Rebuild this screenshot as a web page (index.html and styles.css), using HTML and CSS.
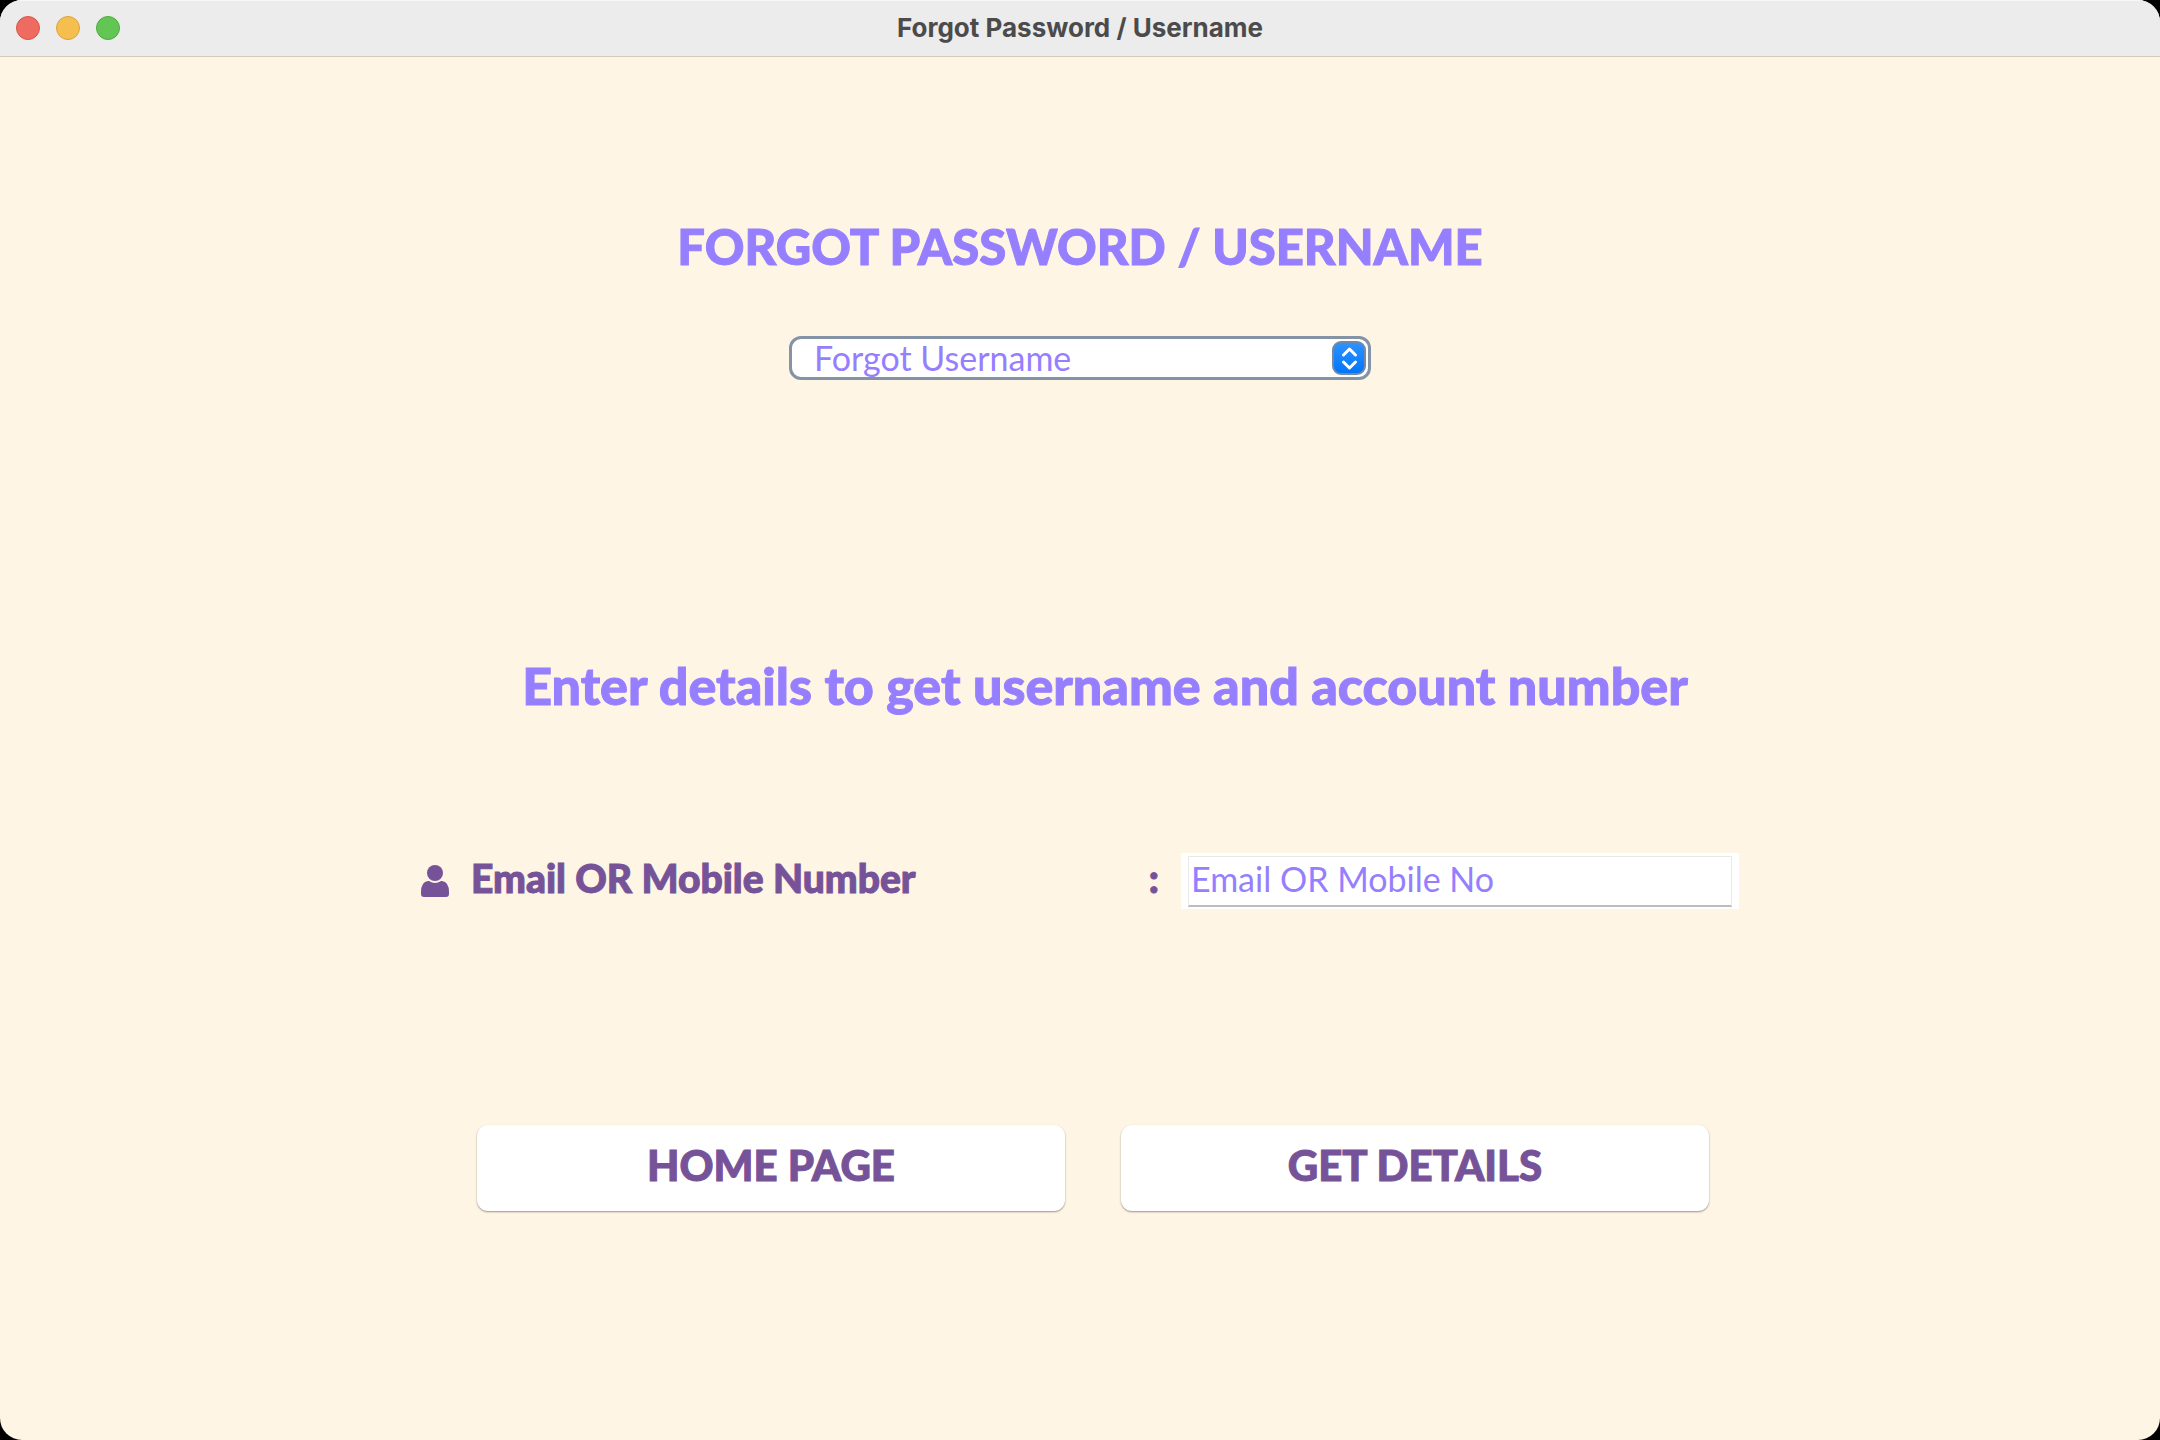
FILE: index.html
```html
<!DOCTYPE html>
<html lang="en">
<head>
<meta charset="utf-8">
<meta name="viewport" content="width=device-width, initial-scale=1">
<title>Forgot Password / Username</title>
<link rel="stylesheet" href="styles.css">
</head>
<body>
<div class="window">
  <header class="titlebar">
    <div class="lights">
      <button class="light light-close" type="button" aria-label="Close"></button>
      <button class="light light-minimise" type="button" aria-label="Minimise"></button>
      <button class="light light-zoom" type="button" aria-label="Zoom"></button>
    </div>
    <div class="window-title">Forgot Password / Username</div>
  </header>
  <main class="content">
    <h1 class="heading">FORGOT PASSWORD / USERNAME</h1>
    <div class="picker">
      <select class="picker-select" aria-label="Recovery type">
        <option>Forgot Username</option>
        <option>Forgot Password</option>
      </select>
      <svg class="picker-arrows" viewBox="0 0 34 34" aria-hidden="true">
        <defs>
          <linearGradient id="blue" x1="0" y1="0" x2="0" y2="1">
            <stop offset="0" stop-color="#3093ff"/>
            <stop offset="1" stop-color="#0074fa"/>
          </linearGradient>
        </defs>
        <rect x="1" y="1" width="32" height="32" rx="8" fill="url(#blue)" stroke="#7389a5" stroke-width="2"/>
        <path d="M11.500 14L17.500 8L23.500 14M11.500 21L17.500 27L23.500 21" fill="none" stroke="#fff" stroke-width="3" stroke-linecap="round" stroke-linejoin="round"/>
      </svg>
    </div>
    <form class="form">
      <h2 class="subheading">Enter details to get username and account number</h2>
      <div class="field">
        <svg class="user-icon" viewBox="0 0 28 32" aria-hidden="true">
          <circle cx="14" cy="8" r="8"/>
          <path d="M7 16H8Q14 20 20 16H21Q28 17 28 27V29Q28 32 25 32H3Q0 32 0 29V27Q0 17 7 16Z"/>
        </svg>
        <label class="field-label" for="contact"><span>Email OR Mobile Number</span><span>:</span></label>
        <div class="field-box">
          <input class="field-input" id="contact" type="text" placeholder="Email OR Mobile No">
        </div>
      </div>
      <div class="actions">
        <button class="action" type="button">HOME PAGE</button>
        <button class="action" type="button">GET DETAILS</button>
      </div>
    </form>
  </main>
</div>
</body>
</html>
```
FILE: styles.css
```css
* {
  box-sizing: border-box;
}

html {
  background: #000;
}

body {
  margin: 0;
  font-family: Lato, sans-serif;
}

.window {
  display: flex;
  flex-direction: column;
  min-height: 100vh;
  overflow: hidden;
  border-radius: 22px;
  background: #fff5e4;
}

.titlebar {
  display: grid;
  grid-template-columns: 1fr auto 1fr;
  align-items: center;
  height: 57px;
  padding: 0 16px 2px;
  border-top: 1px solid #f8f8f8;
  border-bottom: 1px solid #d5cbbb;
  background: #ececec;
}

.lights {
  display: flex;
  gap: 16px;
}

.light {
  width: 24px;
  height: 24px;
  padding: 0;
  border: 1px solid;
  border-radius: 50%;
}

.light-close {
  border-color: #d85549;
  background: #ed6b60;
}

.light-minimise {
  border-color: #dba13b;
  background: #f5bf4f;
}

.light-zoom {
  border-color: #52a93f;
  background: #62c655;
}

.window-title {
  color: #4b4b4b;
  font: 700 26px/32px Inter, sans-serif;
}

.content {
  display: flex;
  flex-direction: column;
  align-items: center;
  padding: 159px 24px;
}

.heading,
.subheading {
  margin: 0;
  color: #967fff;
  font-weight: 900;
  line-height: 60px;
  text-align: center;
  -webkit-text-stroke: 1px currentColor;
}

.heading {
  font-size: 49px;
}

.subheading {
  padding-left: 50px;
  font-size: 52px;
}

.picker {
  position: relative;
  width: 100%;
  max-width: 582px;
  margin-top: 60px;
}

.picker-select {
  display: block;
  width: 100%;
  height: 44px;
  padding: 0 48px 0 22px;
  border: 3px solid #8493a5;
  border-radius: 12px;
  appearance: none;
  background: #fff;
  color: #967fff;
  font: 400 34px/38px Lato, sans-serif;
}

.picker-arrows {
  position: absolute;
  top: 5px;
  right: 5px;
  width: 34px;
  height: 34px;
  pointer-events: none;
}

.form {
  width: 100%;
  max-width: 1318px;
  margin-top: 275px;
}

.field {
  display: grid;
  grid-template-columns: 28px 688px 1fr;
  align-items: center;
  column-gap: 22px;
  margin-top: 138px;
}

.user-icon {
  width: 28px;
  height: 32px;
  fill: #765398;
}

.field-label {
  display: flex;
  justify-content: space-between;
  padding-bottom: 6px;
  color: #765398;
  font-size: 39px;
  font-weight: 900;
  line-height: 44px;
  -webkit-text-stroke: 1px currentColor;
}

.field-box {
  height: 56px;
  padding: 3px 7px;
  background: #fff;
}

.field-input {
  display: block;
  width: 100%;
  height: 51px;
  padding: 0 2px 6px;
  border: 1px solid #e9e9e9;
  border-bottom: 2px solid #bcbcbc;
  background: #fff;
  color: #967fff;
  font: 400 34px/42px Lato, sans-serif;
}

.field-input::placeholder {
  color: #967fff;
  opacity: 1;
}

.actions {
  display: grid;
  grid-template-columns: 1fr 1fr;
  gap: 56px;
  margin-top: 216px;
  padding: 0 30px 0 56px;
}

.action {
  height: 86px;
  padding: 0 0 6px;
  border: 0;
  border-radius: 11px;
  background: #fff;
  box-shadow: 0 1px 2px rgba(0, 0, 0, 0.4);
  color: #765398;
  font: 900 42px/48px Lato, sans-serif;
  -webkit-text-stroke: 1px currentColor;
}
```
